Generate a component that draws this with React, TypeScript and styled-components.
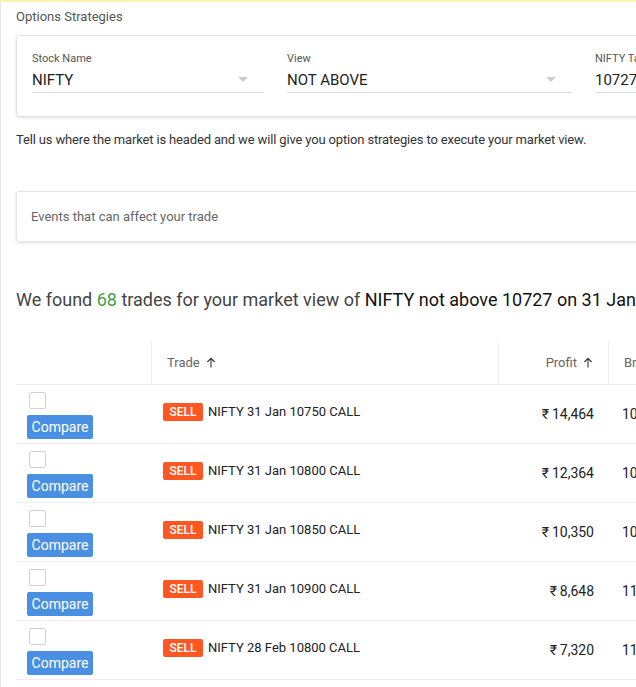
import React from "react";
import styled, { createGlobalStyle } from "styled-components";

const Global = createGlobalStyle`
  html, body { margin: 0; padding: 0; overflow: hidden; background: #fff; }
  body { font-family: Roboto, "Noto Sans", "Liberation Sans", sans-serif; color: #333; }
  * { box-sizing: border-box; }
`;

const Page = styled.div`
  width: 900px;
  height: 687px;
  border-top: 2px solid #fbf3b4;
  border-left: 1px solid #e6e6e6;
  padding: 0 0 0 15px;
`;

const Title = styled.div`
  font-size: 13px;
  color: #555;
  height: 33px;
  line-height: 30px;
`;

const FilterCard = styled.div`
  border: 1px solid #e2e2e2;
  border-radius: 3px;
  box-shadow: 0 1px 3px rgba(0, 0, 0, 0.12);
  height: 82px;
  padding: 15px 15px 0 15px;
  display: flex;
  gap: 23px;
`;

const Field = styled.div<{ $w: number }>`
  width: ${(p) => p.$w}px;
  flex: none;
`;

const Label = styled.div`
  font-size: 11px;
  color: #555;
  line-height: 16px;
`;

const SelectBox = styled.div`
  display: flex;
  align-items: center;
  justify-content: space-between;
  height: 26px;
  border-bottom: 1px solid #ddd;
  font-size: 15px;
  color: #222;
  padding-right: 16px;
`;

const Caret = styled.span`
  width: 0;
  height: 0;
  border-left: 5px solid transparent;
  border-right: 5px solid transparent;
  border-top: 5px solid #ccc;
`;

const Intro = styled.p`
  margin: 14px 0 0 0;
  font-size: 13px;
  color: #333;
  line-height: 18px;
  letter-spacing: -0.15px;
`;

const EventsCard = styled.div`
  margin-top: 42px;
  height: 51px;
  border: 1px solid #e6e6e6;
  border-radius: 3px;
  box-shadow: 0 1px 3px rgba(0, 0, 0, 0.14);
  display: flex;
  align-items: center;
  padding-left: 14px;
  font-size: 13px;
  color: #666;
`;

const Found = styled.h2`
  margin: 46px 0 0 0;
  font-weight: 400;
  font-size: 18px;
  line-height: 24px;
  color: #444;
  white-space: nowrap;
`;

const Green = styled.span`
  color: #43a047;
`;

const Dark = styled.span`
  color: #111;
`;

const Table = styled.div`
  margin-top: 29px;
  width: 760px;
`;

const Row = styled.div<{ $head?: boolean }>`
  display: grid;
  grid-template-columns: 135px 347px 110px 1fr;
  height: ${(p) => (p.$head ? 44 : 59)}px;
  border-bottom: 1px solid #eee;
`;

const HeadCell = styled.div<{ $right?: boolean; $sep?: boolean }>`
  display: flex;
  align-items: center;
  justify-content: ${(p) => (p.$right ? "flex-end" : "flex-start")};
  padding: ${(p) => (p.$right ? "0 15px 0 0" : "0 0 0 15px")};
  border-left: ${(p) => (p.$sep ? "1px solid #eee" : "none")};
  font-size: 13px;
  color: #666;
  gap: 6px;
`;

const SelectCell = styled.div`
  padding: 7px 0 0 11px;
  display: flex;
  flex-direction: column;
  align-items: flex-start;
  gap: 6px;
`;

const Check = styled.span`
  width: 17px;
  height: 17px;
  border: 1.5px solid #d2d2d2;
  border-radius: 2px;
  margin-left: 2px;
  background: #fff;
`;

const CompareBtn = styled.button`
  width: 66px;
  height: 24px;
  border: none;
  border-radius: 2px;
  background: #4a90e2;
  color: #fff;
  font-family: inherit;
  font-size: 14px;
  padding: 0;
`;

const TradeCell = styled.div`
  display: flex;
  align-items: flex-start;
  padding: 18px 0 0 12px;
  font-size: 13px;
  color: #222;
  gap: 5px;
`;

const Badge = styled.span`
  background: #ff5722;
  color: #fff;
  font-size: 12px;
  font-weight: 500;
  height: 18px;
  width: 40px;
  border-radius: 2px;
  display: flex;
  align-items: center;
  justify-content: center;
`;

const TradeName = styled.span`
  line-height: 18px;
`;

const ProfitCell = styled.div`
  display: flex;
  align-items: center;
  justify-content: flex-end;
  padding-right: 14px;
  font-size: 14px;
  color: #222;
`;

const NextCell = styled.div`
  display: flex;
  align-items: center;
  padding-left: 14px;
  font-size: 14px;
  color: #222;
`;

const Arrow = () => (
  <svg width="10" height="11" viewBox="0 0 10 11" fill="none" stroke="#333" strokeWidth="1.1">
    <path d="M5 10.5V1.5M1.4 5L5 1.4 8.6 5" />
  </svg>
);

const rows = [
  { name: "NIFTY 31 Jan 10750 CALL", profit: "₹\u200914,464", be: "10" },
  { name: "NIFTY 31 Jan 10800 CALL", profit: "₹\u200912,364", be: "10" },
  { name: "NIFTY 31 Jan 10850 CALL", profit: "₹\u200910,350", be: "10" },
  { name: "NIFTY 31 Jan 10900 CALL", profit: "₹\u20098,648", be: "11" },
  { name: "NIFTY 28 Feb 10800 CALL", profit: "₹\u20097,320", be: "11" },
];

export default function App() {
  return (
    <>
      <Global />
      <Page>
        <Title>Options Strategies</Title>
        <FilterCard>
          <Field $w={232}>
            <Label>Stock Name</Label>
            <SelectBox>
              NIFTY
              <Caret />
            </SelectBox>
          </Field>
          <Field $w={285}>
            <Label>View</Label>
            <SelectBox>
              NOT ABOVE
              <Caret />
            </SelectBox>
          </Field>
          <Field $w={200}>
            <Label>NIFTY Target</Label>
            <SelectBox>10727</SelectBox>
          </Field>
        </FilterCard>
        <Intro>
          Tell us where the market is headed and we will give you option strategies to execute your market view.
        </Intro>
        <EventsCard>Events that can affect your trade</EventsCard>
        <Found>
          We found <Green>68</Green> trades for your market view of{" "}
          <Dark>NIFTY not above 10727 on 31 Jan 2019</Dark>
        </Found>
        <Table>
          <Row $head>
            <HeadCell />
            <HeadCell $sep>
              Trade <Arrow />
            </HeadCell>
            <HeadCell $sep $right>
              Profit <Arrow />
            </HeadCell>
            <HeadCell $sep>Breakeven</HeadCell>
          </Row>
          {rows.map((r) => (
            <Row key={r.name}>
              <SelectCell>
                <Check />
                <CompareBtn>Compare</CompareBtn>
              </SelectCell>
              <TradeCell>
                <Badge>SELL</Badge>
                <TradeName>{r.name}</TradeName>
              </TradeCell>
              <ProfitCell>{r.profit}</ProfitCell>
              <NextCell>{r.be}727</NextCell>
            </Row>
          ))}
        </Table>
      </Page>
    </>
  );
}
